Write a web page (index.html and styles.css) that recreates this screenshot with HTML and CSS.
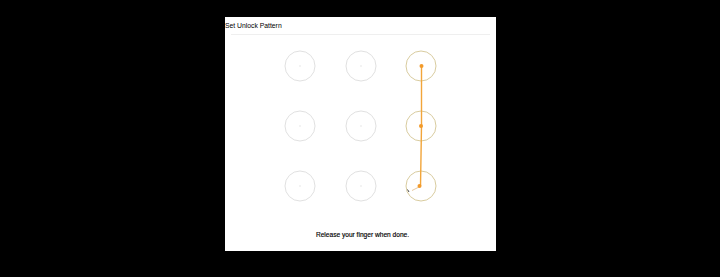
FILE: index.html
```html
<!DOCTYPE html>
<html>
<head>
<meta charset="utf-8">
<link rel="stylesheet" href="styles.css">
</head>
<body>
<div class="panel">
  <div class="title">Set Unlock Pattern</div>
  <div class="divider"></div>
  <svg class="pattern" width="271" height="180" viewBox="0 0 271 180">
    <g class="ring">
      <circle cx="75" cy="31" r="15"/>
      <circle cx="136" cy="31" r="15"/>
      <circle cx="75" cy="91" r="15"/>
      <circle cx="136" cy="91" r="15"/>
      <circle cx="75" cy="151" r="15"/>
      <circle cx="136" cy="151" r="15"/>
    </g>
    <g class="pip">
      <circle cx="75" cy="31" r="1"/>
      <circle cx="136" cy="31" r="1"/>
      <circle cx="75" cy="91" r="1"/>
      <circle cx="136" cy="91" r="1"/>
      <circle cx="75" cy="151" r="1"/>
      <circle cx="136" cy="151" r="1"/>
    </g>
    <g class="ring-on">
      <circle cx="196" cy="31" r="15"/>
      <circle cx="196" cy="91" r="15"/>
      <circle cx="196" cy="151" r="15"/>
    </g>
    <polyline class="track" points="196.5,31 196.5,91 195.5,151"/>
    <line class="tail" x1="194" y1="152" x2="187" y2="155.5"/>
    <g class="dot">
      <circle cx="196.5" cy="31" r="2"/>
      <circle cx="196" cy="91" r="2"/>
      <circle cx="194.5" cy="151" r="2"/>
    </g>
    <path class="cursor" d="M182.5 154.5 L184 157"/>
  </svg>
  <div class="hint">Release your finger when done.</div>
</div>
</body>
</html>
```
FILE: styles.css
```css
html, body {
  margin: 0;
  padding: 0;
  background: #000;
}
body {
  width: 720px;
  height: 277px;
  display: flex;
  justify-content: center;
  align-items: flex-start;
  padding-top: 17px;
  box-sizing: border-box;
  font-family: "Liberation Sans", Arial, sans-serif;
}
.panel {
  width: 271px;
  height: 234px;
  background: #fff;
  display: flex;
  flex-direction: column;
  margin-left: 1px;
}
.title {
  height: 17px;
  line-height: 17px;
  font-size: 6.8px;
  color: #000;
  white-space: nowrap;
}
.divider {
  height: 1px;
  margin: 0 6px;
  background: #efefef;
}
.pattern {
  display: block;
}
.ring circle {
  fill: none;
  stroke: #e1e1e1;
  stroke-width: 1;
}
.pip circle {
  fill: #efefef;
}
.ring-on circle {
  fill: none;
  stroke: #d9cc9f;
  stroke-width: 1;
}
.track {
  fill: none;
  stroke: #f2a53a;
  stroke-width: 1.4;
}
.tail {
  stroke: #e8c9a0;
  stroke-width: 1;
}
.dot circle {
  fill: #f29a2a;
}
.cursor {
  stroke: #444;
  stroke-width: 1;
  fill: none;
}
.hint {
  margin-top: 15px;
  line-height: 10px;
  font-size: 6.6px;
  color: #000;
  text-align: center;
  padding-left: 4px;
  -webkit-text-stroke: 0.15px #000;
}
```
